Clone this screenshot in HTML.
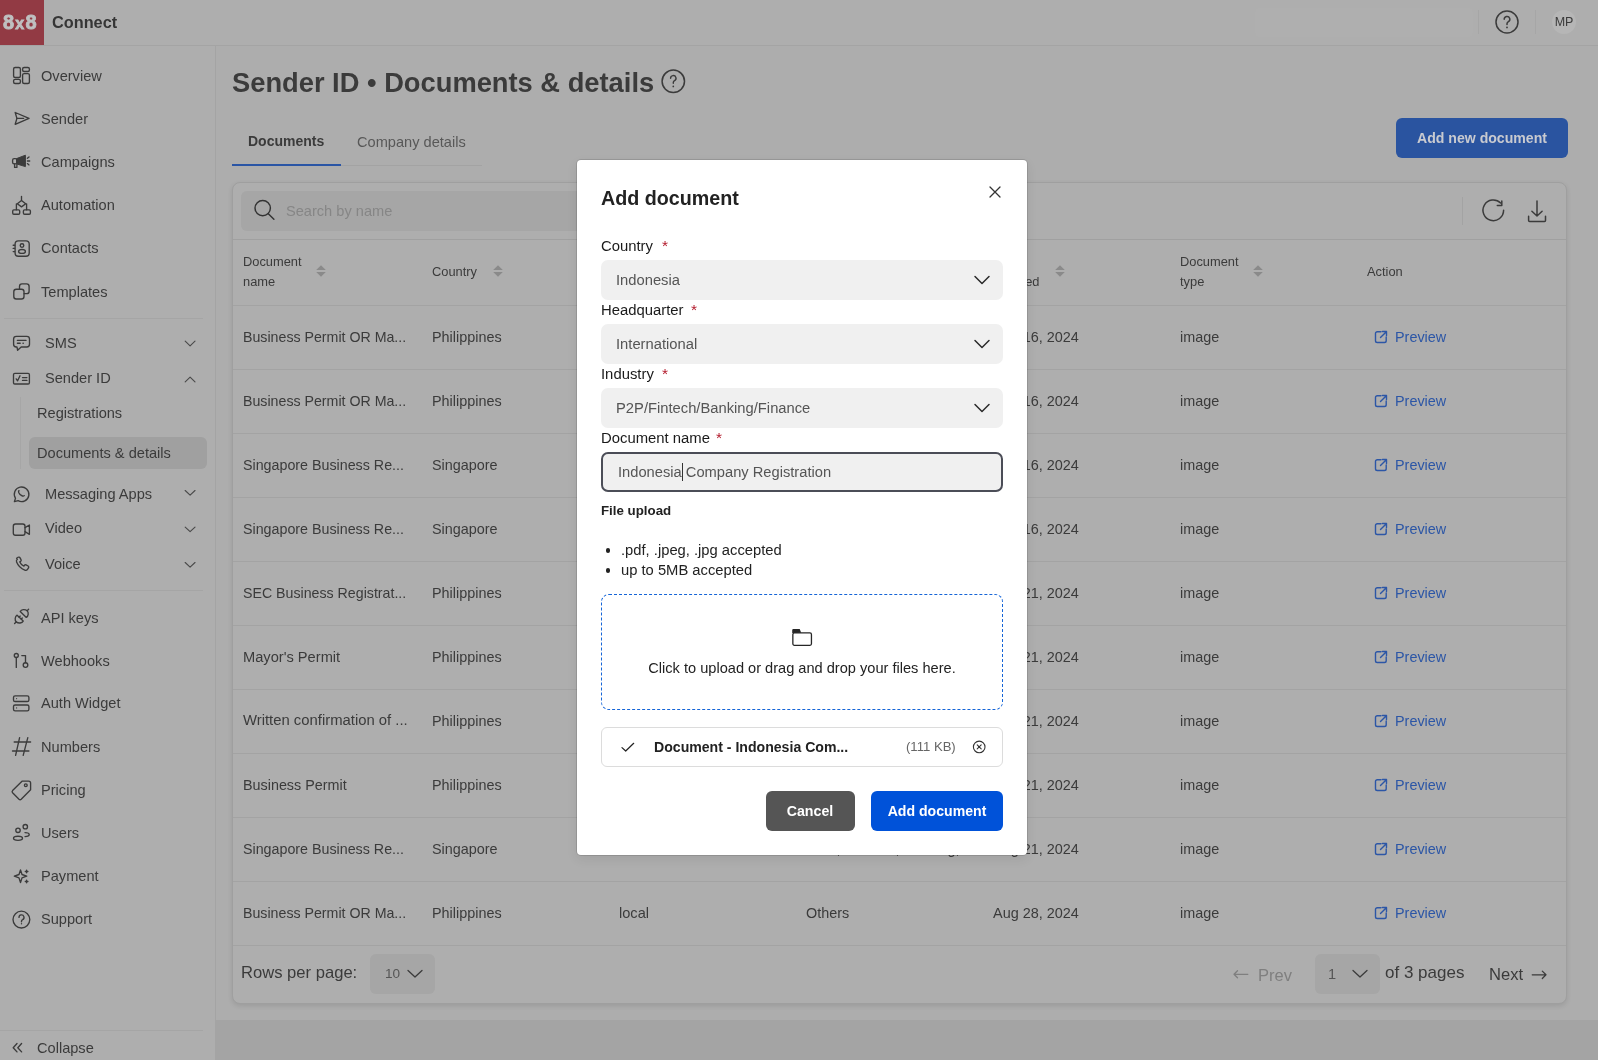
<!DOCTYPE html>
<html><head><meta charset="utf-8"><style>
html,body{margin:0;padding:0;width:1598px;height:1060px;overflow:hidden;background:#adadad;}
body{position:relative;font-family:"Liberation Sans",sans-serif;-webkit-font-smoothing:antialiased;}
.t{position:absolute;white-space:nowrap;line-height:1;will-change:transform;}
.r{position:absolute;}
svg.r{overflow:visible;}
</style></head><body>
<div class="r" style="left:0px;top:0px;width:1598px;height:1060px;background:#adadad;"></div>
<div class="r" style="left:215px;top:1020px;width:1383px;height:40px;background:#a4a4a4;"></div>
<div class="r" style="left:0px;top:0px;width:1598px;height:45px;background:#aeaeae;"></div>
<div class="r" style="left:0px;top:45px;width:1598px;height:1px;background:#a4a4a4;"></div>
<div class="r" style="left:0px;top:46px;width:215px;height:1014px;background:#aeaeae;"></div>
<div class="r" style="left:215px;top:46px;width:1px;height:1014px;background:#a4a4a4;"></div>
<div class="r" style="left:0px;top:0px;width:44px;height:45px;background:#923a44;"></div>
<div class="t" style="left:2.6px;top:11.97px;font-size:20px;color:#bfc0c1;font-weight:700;-webkit-text-stroke:0.8px #bfc0c1;letter-spacing:1.1px;">8<span style="font-size:16px;letter-spacing:1.3px;">x</span>8</div>
<div class="t" style="left:52px;top:13.80px;font-size:16.3px;color:#363636;font-weight:700;">Connect</div>
<div class="r" style="left:1255px;top:8px;width:218px;height:29px;background:#afafaf;border-radius:4px;"></div>
<div class="r" style="left:1478px;top:10px;width:1px;height:24px;background:#a6a6a6;"></div>
<div class="r" style="left:1535px;top:10px;width:1px;height:24px;background:#a6a6a6;"></div>
<svg class="r" style="left:1495px;top:10px;" width="24" height="24" viewBox="0 0 24 24"><circle cx="12" cy="12" r="11" fill="none" stroke="#3b3b3b" stroke-width="1.5"/><path d="M9.2 9.3a2.8 2.8 0 1 1 4.2 2.4c-.9.5-1.4 1-1.4 2.1v.6" fill="none" stroke="#3b3b3b" stroke-width="1.5" stroke-linecap="round"/><circle cx="12" cy="17.4" r="0.9" fill="#3b3b3b"/></svg>
<div class="r" style="left:1552px;top:10px;width:24px;height:24px;border-radius:50%;background:#b6b6b6;"></div>
<div class="t" style="left:1564px;top:15.92px;font-size:12.5px;color:#3b3b3b;font-weight:400;transform:translateX(-50%);">MP</div>
<div class="t" style="left:41px;top:68.64px;font-size:14.6px;color:#3b3b3b;font-weight:400;">Overview</div>
<div class="t" style="left:41px;top:111.94px;font-size:14.6px;color:#3b3b3b;font-weight:400;">Sender</div>
<div class="t" style="left:41px;top:155.14px;font-size:14.6px;color:#3b3b3b;font-weight:400;">Campaigns</div>
<div class="t" style="left:41px;top:198.14px;font-size:14.6px;color:#3b3b3b;font-weight:400;">Automation</div>
<div class="t" style="left:41px;top:241.14px;font-size:14.6px;color:#3b3b3b;font-weight:400;">Contacts</div>
<div class="t" style="left:41px;top:284.64px;font-size:14.6px;color:#3b3b3b;font-weight:400;">Templates</div>
<div class="r" style="left:4px;top:318px;width:199px;height:1px;background:#a5a5a5;"></div>
<div class="t" style="left:45px;top:335.64px;font-size:14.6px;color:#3b3b3b;font-weight:400;">SMS</div>
<div class="t" style="left:45px;top:370.64px;font-size:14.6px;color:#3b3b3b;font-weight:400;">Sender ID</div>
<div class="t" style="left:45px;top:486.64px;font-size:14.6px;color:#3b3b3b;font-weight:400;">Messaging Apps</div>
<div class="t" style="left:45px;top:521.14px;font-size:14.6px;color:#3b3b3b;font-weight:400;">Video</div>
<div class="t" style="left:45px;top:557.14px;font-size:14.6px;color:#3b3b3b;font-weight:400;">Voice</div>
<div class="r" style="left:20px;top:397px;width:1px;height:72px;background:#a6a6a6;"></div>
<div class="r" style="left:29px;top:437px;width:178px;height:32px;background:#a0a0a0;border-radius:6px;"></div>
<div class="t" style="left:37px;top:405.64px;font-size:14.6px;color:#3b3b3b;font-weight:400;">Registrations</div>
<div class="t" style="left:37px;top:446.24px;font-size:14.6px;color:#3b3b3b;font-weight:400;">Documents &amp; details</div>
<div class="r" style="left:4px;top:590px;width:199px;height:1px;background:#a5a5a5;"></div>
<div class="t" style="left:41px;top:610.64px;font-size:14.6px;color:#3b3b3b;font-weight:400;">API keys</div>
<div class="t" style="left:41px;top:653.64px;font-size:14.6px;color:#3b3b3b;font-weight:400;">Webhooks</div>
<div class="t" style="left:41px;top:696.14px;font-size:14.6px;color:#3b3b3b;font-weight:400;">Auth Widget</div>
<div class="t" style="left:41px;top:740.14px;font-size:14.6px;color:#3b3b3b;font-weight:400;">Numbers</div>
<div class="t" style="left:41px;top:783.14px;font-size:14.6px;color:#3b3b3b;font-weight:400;">Pricing</div>
<div class="t" style="left:41px;top:826.14px;font-size:14.6px;color:#3b3b3b;font-weight:400;">Users</div>
<div class="t" style="left:41px;top:869.14px;font-size:14.6px;color:#3b3b3b;font-weight:400;">Payment</div>
<div class="t" style="left:41px;top:912.14px;font-size:14.6px;color:#3b3b3b;font-weight:400;">Support</div>
<div class="r" style="left:0px;top:1030px;width:203px;height:1px;background:#a5a5a5;"></div>
<div class="t" style="left:37px;top:1041.04px;font-size:14.6px;color:#3b3b3b;font-weight:400;">Collapse</div>
<div class="t" style="left:232px;top:69.09px;font-size:27.3px;color:#3b3b3b;font-weight:700;">Sender ID • Documents &amp; details</div>
<svg class="r" style="left:660px;top:68px;" width="26" height="26" viewBox="0 0 26 26"><circle cx="13.3" cy="13.3" r="11.2" fill="none" stroke="#3b3b3b" stroke-width="1.5"/><path d="M10.6 10.2a2.7 2.7 0 1 1 4 2.4c-.9.5-1.3 1-1.3 2v.6" fill="none" stroke="#3b3b3b" stroke-width="1.4" stroke-linecap="round"/><circle cx="13.3" cy="18.4" r="0.85" fill="#3b3b3b"/></svg>
<div class="t" style="left:248px;top:134.15px;font-size:14px;color:#3b3b3b;font-weight:700;">Documents</div>
<div class="t" style="left:357px;top:135.04px;font-size:14.6px;color:#585858;font-weight:400;">Company details</div>
<div class="r" style="left:232px;top:165px;width:250px;height:1px;background:#a3a3a3;"></div>
<div class="r" style="left:232px;top:164px;width:109px;height:2px;background:#2a55a5;"></div>
<div class="r" style="left:1396px;top:118px;width:172px;height:40px;background:#2a54a0;border-radius:6px;"></div>
<div class="t" style="left:1482px;top:131.06px;font-size:14.1px;color:#c8cad0;font-weight:700;transform:translateX(-50%);">Add new document</div>
<div class="r" style="left:232px;top:182px;width:1335px;height:822px;background:#aeaeae;border:1px solid #9f9f9f;border-radius:8px;box-sizing:border-box;box-shadow:0 2px 5px rgba(0,0,0,0.10);"></div>
<div class="r" style="left:241px;top:191px;width:700px;height:40px;background:#a6a6a6;border-radius:6px;"></div>
<svg class="r" style="left:252px;top:198px;" width="26" height="26" viewBox="0 0 26 26"><circle cx="10.7" cy="10.1" r="7.7" fill="none" stroke="#333" stroke-width="1.45"/><path d="M16.3 15.7l5.6 5.6" stroke="#333" stroke-width="1.45" stroke-linecap="round"/></svg>
<div class="t" style="left:286px;top:203.64px;font-size:14.6px;color:#868686;font-weight:400;">Search by name</div>
<div class="r" style="left:1462px;top:197px;width:1px;height:28px;background:#a3a3a3;"></div>
<svg class="r" style="left:1480px;top:198px;" width="26" height="26" viewBox="0 0 26 26"><path d="M23.6 12.3A10.3 10.3 0 1 1 20.58 5.02" fill="none" stroke="#3b3b3b" stroke-width="1.5" stroke-linecap="round"/><path d="M21.8 2.9V7.5H17.3" fill="none" stroke="#3b3b3b" stroke-width="1.5" stroke-linecap="round" stroke-linejoin="round"/></svg>
<svg class="r" style="left:1524px;top:198.8px;" width="26" height="26" viewBox="0 0 26 26"><path d="M13 2.1V16.8M7.9 12.3L13 17L18.1 12.3M4.6 17.3V21.4q0 1 1 1H20.5q1 0 1-1V17.3" fill="none" stroke="#3b3b3b" stroke-width="1.5" stroke-linecap="round" stroke-linejoin="round"/></svg>
<div class="r" style="left:233px;top:239px;width:1333px;height:1px;background:#a0a0a0;"></div>
<div class="r" style="left:233px;top:305px;width:1333px;height:1px;background:#a3a3a3;"></div>
<div class="t" style="left:243px;top:255.62px;font-size:12.85px;color:#3b3b3b;font-weight:400;">Document</div>
<div class="t" style="left:243px;top:275.62px;font-size:12.85px;color:#3b3b3b;font-weight:400;">name</div>
<svg class="r" style="left:316px;top:264px;" width="10" height="14" viewBox="0 0 10 14"><path d="M5 1.2L9.8 5.9H0.2z M5 12.8L0.2 8.1h9.6z" fill="#8a8a8a"/></svg>
<div class="t" style="left:432px;top:265.62px;font-size:12.85px;color:#3b3b3b;font-weight:400;">Country</div>
<svg class="r" style="left:492.5px;top:264px;" width="10" height="14" viewBox="0 0 10 14"><path d="M5 1.2L9.8 5.9H0.2z M5 12.8L0.2 8.1h9.6z" fill="#8a8a8a"/></svg>
<div class="t" style="left:619px;top:255.62px;font-size:12.85px;color:#3b3b3b;font-weight:400;">Type</div>
<svg class="r" style="left:660px;top:264px;" width="10" height="14" viewBox="0 0 10 14"><path d="M5 1.2L9.8 5.9H0.2z M5 12.8L0.2 8.1h9.6z" fill="#8a8a8a"/></svg>
<div class="t" style="left:806px;top:255.62px;font-size:12.85px;color:#3b3b3b;font-weight:400;">Industry</div>
<svg class="r" style="left:870px;top:264px;" width="10" height="14" viewBox="0 0 10 14"><path d="M5 1.2L9.8 5.9H0.2z M5 12.8L0.2 8.1h9.6z" fill="#8a8a8a"/></svg>
<div class="t" style="left:993px;top:255.62px;font-size:12.85px;color:#3b3b3b;font-weight:400;">Date</div>
<div class="t" style="left:993px;top:275.62px;font-size:12.85px;color:#3b3b3b;font-weight:400;">updated</div>
<svg class="r" style="left:1055px;top:264px;" width="10" height="14" viewBox="0 0 10 14"><path d="M5 1.2L9.8 5.9H0.2z M5 12.8L0.2 8.1h9.6z" fill="#8a8a8a"/></svg>
<div class="t" style="left:1180px;top:255.62px;font-size:12.85px;color:#3b3b3b;font-weight:400;">Document</div>
<div class="t" style="left:1180px;top:275.62px;font-size:12.85px;color:#3b3b3b;font-weight:400;">type</div>
<svg class="r" style="left:1253px;top:264px;" width="10" height="14" viewBox="0 0 10 14"><path d="M5 1.2L9.8 5.9H0.2z M5 12.8L0.2 8.1h9.6z" fill="#8a8a8a"/></svg>
<div class="t" style="left:1367px;top:265.62px;font-size:12.85px;color:#3b3b3b;font-weight:400;">Action</div>
<div class="t" style="left:243px;top:329.98px;font-size:14.2px;color:#3b3b3b;font-weight:400;">Business Permit OR Ma...</div>
<div class="t" style="left:432px;top:329.81px;font-size:14.4px;color:#3b3b3b;font-weight:400;">Philippines</div>
<div class="t" style="left:619px;top:329.64px;font-size:14.6px;color:#3b3b3b;font-weight:400;">local</div>
<div class="t" style="left:806px;top:329.81px;font-size:14.4px;color:#3b3b3b;font-weight:400;">Others</div>
<div class="t" style="left:993px;top:329.77px;font-size:14.45px;color:#3b3b3b;font-weight:400;">Aug 16, 2024</div>
<div class="t" style="left:1180px;top:329.81px;font-size:14.4px;color:#3b3b3b;font-weight:400;">image</div>
<svg class="r" style="left:1373px;top:329px;" width="16" height="16" viewBox="0 0 16 16"><path d="M8 2.8H4.3A1.8 1.8 0 0 0 2.5 4.6v7.1a1.8 1.8 0 0 0 1.8 1.8h7.1a1.8 1.8 0 0 0 1.8-1.8V8M9.5 2.5h4v4M13.3 2.7L7.5 8.5" fill="none" stroke="#2c56a6" stroke-width="1.4" stroke-linecap="round" stroke-linejoin="round"/></svg>
<div class="t" style="left:1395px;top:329.81px;font-size:14.4px;color:#2c56a6;font-weight:400;">Preview</div>
<div class="r" style="left:233px;top:369px;width:1333px;height:1px;background:#a3a3a3;"></div>
<div class="t" style="left:243px;top:393.98px;font-size:14.2px;color:#3b3b3b;font-weight:400;">Business Permit OR Ma...</div>
<div class="t" style="left:432px;top:393.81px;font-size:14.4px;color:#3b3b3b;font-weight:400;">Philippines</div>
<div class="t" style="left:619px;top:393.64px;font-size:14.6px;color:#3b3b3b;font-weight:400;">local</div>
<div class="t" style="left:806px;top:393.81px;font-size:14.4px;color:#3b3b3b;font-weight:400;">Others</div>
<div class="t" style="left:993px;top:393.77px;font-size:14.45px;color:#3b3b3b;font-weight:400;">Aug 16, 2024</div>
<div class="t" style="left:1180px;top:393.81px;font-size:14.4px;color:#3b3b3b;font-weight:400;">image</div>
<svg class="r" style="left:1373px;top:393px;" width="16" height="16" viewBox="0 0 16 16"><path d="M8 2.8H4.3A1.8 1.8 0 0 0 2.5 4.6v7.1a1.8 1.8 0 0 0 1.8 1.8h7.1a1.8 1.8 0 0 0 1.8-1.8V8M9.5 2.5h4v4M13.3 2.7L7.5 8.5" fill="none" stroke="#2c56a6" stroke-width="1.4" stroke-linecap="round" stroke-linejoin="round"/></svg>
<div class="t" style="left:1395px;top:393.81px;font-size:14.4px;color:#2c56a6;font-weight:400;">Preview</div>
<div class="r" style="left:233px;top:433px;width:1333px;height:1px;background:#a3a3a3;"></div>
<div class="t" style="left:243px;top:457.91px;font-size:14.28px;color:#3b3b3b;font-weight:400;">Singapore Business Re...</div>
<div class="t" style="left:432px;top:457.81px;font-size:14.4px;color:#3b3b3b;font-weight:400;">Singapore</div>
<div class="t" style="left:619px;top:457.64px;font-size:14.6px;color:#3b3b3b;font-weight:400;">local</div>
<div class="t" style="left:806px;top:457.81px;font-size:14.4px;color:#3b3b3b;font-weight:400;">Others</div>
<div class="t" style="left:993px;top:457.77px;font-size:14.45px;color:#3b3b3b;font-weight:400;">Aug 16, 2024</div>
<div class="t" style="left:1180px;top:457.81px;font-size:14.4px;color:#3b3b3b;font-weight:400;">image</div>
<svg class="r" style="left:1373px;top:457px;" width="16" height="16" viewBox="0 0 16 16"><path d="M8 2.8H4.3A1.8 1.8 0 0 0 2.5 4.6v7.1a1.8 1.8 0 0 0 1.8 1.8h7.1a1.8 1.8 0 0 0 1.8-1.8V8M9.5 2.5h4v4M13.3 2.7L7.5 8.5" fill="none" stroke="#2c56a6" stroke-width="1.4" stroke-linecap="round" stroke-linejoin="round"/></svg>
<div class="t" style="left:1395px;top:457.81px;font-size:14.4px;color:#2c56a6;font-weight:400;">Preview</div>
<div class="r" style="left:233px;top:497px;width:1333px;height:1px;background:#a3a3a3;"></div>
<div class="t" style="left:243px;top:521.91px;font-size:14.28px;color:#3b3b3b;font-weight:400;">Singapore Business Re...</div>
<div class="t" style="left:432px;top:521.81px;font-size:14.4px;color:#3b3b3b;font-weight:400;">Singapore</div>
<div class="t" style="left:619px;top:521.64px;font-size:14.6px;color:#3b3b3b;font-weight:400;">local</div>
<div class="t" style="left:806px;top:521.81px;font-size:14.4px;color:#3b3b3b;font-weight:400;">Others</div>
<div class="t" style="left:993px;top:521.77px;font-size:14.45px;color:#3b3b3b;font-weight:400;">Aug 16, 2024</div>
<div class="t" style="left:1180px;top:521.81px;font-size:14.4px;color:#3b3b3b;font-weight:400;">image</div>
<svg class="r" style="left:1373px;top:521px;" width="16" height="16" viewBox="0 0 16 16"><path d="M8 2.8H4.3A1.8 1.8 0 0 0 2.5 4.6v7.1a1.8 1.8 0 0 0 1.8 1.8h7.1a1.8 1.8 0 0 0 1.8-1.8V8M9.5 2.5h4v4M13.3 2.7L7.5 8.5" fill="none" stroke="#2c56a6" stroke-width="1.4" stroke-linecap="round" stroke-linejoin="round"/></svg>
<div class="t" style="left:1395px;top:521.81px;font-size:14.4px;color:#2c56a6;font-weight:400;">Preview</div>
<div class="r" style="left:233px;top:561px;width:1333px;height:1px;background:#a3a3a3;"></div>
<div class="t" style="left:243px;top:585.98px;font-size:14.2px;color:#3b3b3b;font-weight:400;">SEC Business Registrat...</div>
<div class="t" style="left:432px;top:585.81px;font-size:14.4px;color:#3b3b3b;font-weight:400;">Philippines</div>
<div class="t" style="left:619px;top:585.64px;font-size:14.6px;color:#3b3b3b;font-weight:400;">local</div>
<div class="t" style="left:806px;top:585.81px;font-size:14.4px;color:#3b3b3b;font-weight:400;">Others</div>
<div class="t" style="left:993px;top:585.77px;font-size:14.45px;color:#3b3b3b;font-weight:400;">Aug 21, 2024</div>
<div class="t" style="left:1180px;top:585.81px;font-size:14.4px;color:#3b3b3b;font-weight:400;">image</div>
<svg class="r" style="left:1373px;top:585px;" width="16" height="16" viewBox="0 0 16 16"><path d="M8 2.8H4.3A1.8 1.8 0 0 0 2.5 4.6v7.1a1.8 1.8 0 0 0 1.8 1.8h7.1a1.8 1.8 0 0 0 1.8-1.8V8M9.5 2.5h4v4M13.3 2.7L7.5 8.5" fill="none" stroke="#2c56a6" stroke-width="1.4" stroke-linecap="round" stroke-linejoin="round"/></svg>
<div class="t" style="left:1395px;top:585.81px;font-size:14.4px;color:#2c56a6;font-weight:400;">Preview</div>
<div class="r" style="left:233px;top:625px;width:1333px;height:1px;background:#a3a3a3;"></div>
<div class="t" style="left:243px;top:649.60px;font-size:14.65px;color:#3b3b3b;font-weight:400;">Mayor&#x27;s Permit</div>
<div class="t" style="left:432px;top:649.81px;font-size:14.4px;color:#3b3b3b;font-weight:400;">Philippines</div>
<div class="t" style="left:619px;top:649.64px;font-size:14.6px;color:#3b3b3b;font-weight:400;">local</div>
<div class="t" style="left:806px;top:649.81px;font-size:14.4px;color:#3b3b3b;font-weight:400;">Others</div>
<div class="t" style="left:993px;top:649.77px;font-size:14.45px;color:#3b3b3b;font-weight:400;">Aug 21, 2024</div>
<div class="t" style="left:1180px;top:649.81px;font-size:14.4px;color:#3b3b3b;font-weight:400;">image</div>
<svg class="r" style="left:1373px;top:649px;" width="16" height="16" viewBox="0 0 16 16"><path d="M8 2.8H4.3A1.8 1.8 0 0 0 2.5 4.6v7.1a1.8 1.8 0 0 0 1.8 1.8h7.1a1.8 1.8 0 0 0 1.8-1.8V8M9.5 2.5h4v4M13.3 2.7L7.5 8.5" fill="none" stroke="#2c56a6" stroke-width="1.4" stroke-linecap="round" stroke-linejoin="round"/></svg>
<div class="t" style="left:1395px;top:649.81px;font-size:14.4px;color:#2c56a6;font-weight:400;">Preview</div>
<div class="r" style="left:233px;top:689px;width:1333px;height:1px;background:#a3a3a3;"></div>
<div class="t" style="left:243px;top:713.43px;font-size:14.85px;color:#3b3b3b;font-weight:400;">Written confirmation of ...</div>
<div class="t" style="left:432px;top:713.81px;font-size:14.4px;color:#3b3b3b;font-weight:400;">Philippines</div>
<div class="t" style="left:619px;top:713.64px;font-size:14.6px;color:#3b3b3b;font-weight:400;">local</div>
<div class="t" style="left:806px;top:713.81px;font-size:14.4px;color:#3b3b3b;font-weight:400;">Others</div>
<div class="t" style="left:993px;top:713.77px;font-size:14.45px;color:#3b3b3b;font-weight:400;">Aug 21, 2024</div>
<div class="t" style="left:1180px;top:713.81px;font-size:14.4px;color:#3b3b3b;font-weight:400;">image</div>
<svg class="r" style="left:1373px;top:713px;" width="16" height="16" viewBox="0 0 16 16"><path d="M8 2.8H4.3A1.8 1.8 0 0 0 2.5 4.6v7.1a1.8 1.8 0 0 0 1.8 1.8h7.1a1.8 1.8 0 0 0 1.8-1.8V8M9.5 2.5h4v4M13.3 2.7L7.5 8.5" fill="none" stroke="#2c56a6" stroke-width="1.4" stroke-linecap="round" stroke-linejoin="round"/></svg>
<div class="t" style="left:1395px;top:713.81px;font-size:14.4px;color:#2c56a6;font-weight:400;">Preview</div>
<div class="r" style="left:233px;top:753px;width:1333px;height:1px;background:#a3a3a3;"></div>
<div class="t" style="left:243px;top:777.85px;font-size:14.35px;color:#3b3b3b;font-weight:400;">Business Permit</div>
<div class="t" style="left:432px;top:777.81px;font-size:14.4px;color:#3b3b3b;font-weight:400;">Philippines</div>
<div class="t" style="left:619px;top:777.64px;font-size:14.6px;color:#3b3b3b;font-weight:400;">local</div>
<div class="t" style="left:806px;top:777.81px;font-size:14.4px;color:#3b3b3b;font-weight:400;">Others</div>
<div class="t" style="left:993px;top:777.77px;font-size:14.45px;color:#3b3b3b;font-weight:400;">Aug 21, 2024</div>
<div class="t" style="left:1180px;top:777.81px;font-size:14.4px;color:#3b3b3b;font-weight:400;">image</div>
<svg class="r" style="left:1373px;top:777px;" width="16" height="16" viewBox="0 0 16 16"><path d="M8 2.8H4.3A1.8 1.8 0 0 0 2.5 4.6v7.1a1.8 1.8 0 0 0 1.8 1.8h7.1a1.8 1.8 0 0 0 1.8-1.8V8M9.5 2.5h4v4M13.3 2.7L7.5 8.5" fill="none" stroke="#2c56a6" stroke-width="1.4" stroke-linecap="round" stroke-linejoin="round"/></svg>
<div class="t" style="left:1395px;top:777.81px;font-size:14.4px;color:#2c56a6;font-weight:400;">Preview</div>
<div class="r" style="left:233px;top:817px;width:1333px;height:1px;background:#a3a3a3;"></div>
<div class="t" style="left:243px;top:841.91px;font-size:14.28px;color:#3b3b3b;font-weight:400;">Singapore Business Re...</div>
<div class="t" style="left:432px;top:841.81px;font-size:14.4px;color:#3b3b3b;font-weight:400;">Singapore</div>
<div class="t" style="left:619px;top:841.64px;font-size:14.6px;color:#3b3b3b;font-weight:400;">local</div>
<div class="t" style="left:806px;top:841.81px;font-size:14.4px;color:#3b3b3b;font-weight:400;">Tech, Finance, Banking, ...</div>
<div class="t" style="left:993px;top:841.77px;font-size:14.45px;color:#3b3b3b;font-weight:400;">Aug 21, 2024</div>
<div class="t" style="left:1180px;top:841.81px;font-size:14.4px;color:#3b3b3b;font-weight:400;">image</div>
<svg class="r" style="left:1373px;top:841px;" width="16" height="16" viewBox="0 0 16 16"><path d="M8 2.8H4.3A1.8 1.8 0 0 0 2.5 4.6v7.1a1.8 1.8 0 0 0 1.8 1.8h7.1a1.8 1.8 0 0 0 1.8-1.8V8M9.5 2.5h4v4M13.3 2.7L7.5 8.5" fill="none" stroke="#2c56a6" stroke-width="1.4" stroke-linecap="round" stroke-linejoin="round"/></svg>
<div class="t" style="left:1395px;top:841.81px;font-size:14.4px;color:#2c56a6;font-weight:400;">Preview</div>
<div class="r" style="left:233px;top:881px;width:1333px;height:1px;background:#a3a3a3;"></div>
<div class="t" style="left:243px;top:905.98px;font-size:14.2px;color:#3b3b3b;font-weight:400;">Business Permit OR Ma...</div>
<div class="t" style="left:432px;top:905.81px;font-size:14.4px;color:#3b3b3b;font-weight:400;">Philippines</div>
<div class="t" style="left:619px;top:905.64px;font-size:14.6px;color:#3b3b3b;font-weight:400;">local</div>
<div class="t" style="left:806px;top:905.81px;font-size:14.4px;color:#3b3b3b;font-weight:400;">Others</div>
<div class="t" style="left:993px;top:905.77px;font-size:14.45px;color:#3b3b3b;font-weight:400;">Aug 28, 2024</div>
<div class="t" style="left:1180px;top:905.81px;font-size:14.4px;color:#3b3b3b;font-weight:400;">image</div>
<svg class="r" style="left:1373px;top:905px;" width="16" height="16" viewBox="0 0 16 16"><path d="M8 2.8H4.3A1.8 1.8 0 0 0 2.5 4.6v7.1a1.8 1.8 0 0 0 1.8 1.8h7.1a1.8 1.8 0 0 0 1.8-1.8V8M9.5 2.5h4v4M13.3 2.7L7.5 8.5" fill="none" stroke="#2c56a6" stroke-width="1.4" stroke-linecap="round" stroke-linejoin="round"/></svg>
<div class="t" style="left:1395px;top:905.81px;font-size:14.4px;color:#2c56a6;font-weight:400;">Preview</div>
<div class="r" style="left:233px;top:945px;width:1333px;height:1px;background:#a3a3a3;"></div>
<div class="t" style="left:241px;top:964.95px;font-size:16.6px;color:#3b3b3b;font-weight:400;">Rows per page:</div>
<div class="r" style="left:370px;top:954px;width:65px;height:40px;background:#a6a6a6;border-radius:6px;"></div>
<div class="t" style="left:384.5px;top:967.49px;font-size:13.6px;color:#555;font-weight:400;">10</div>
<svg class="r" style="left:405.5px;top:968px;" width="18" height="12" viewBox="0 0 18 12"><path d="M2 2.5l7 6.5 7-6.5" fill="none" stroke="#3b3b3b" stroke-width="1.3" stroke-linecap="round" stroke-linejoin="round"/></svg>
<svg class="r" style="left:1231px;top:968.5px;" width="18" height="12" viewBox="0 0 18 12"><path d="M16.8 5.3H3M6.5 1.8L3 5.3L6.5 8.8" fill="none" stroke="#7f7f7f" stroke-width="1.3" stroke-linecap="round" stroke-linejoin="round"/></svg>
<div class="t" style="left:1257.5px;top:967.03px;font-size:16.5px;color:#7f7f7f;font-weight:400;">Prev</div>
<div class="r" style="left:1315px;top:954px;width:65px;height:40px;background:#a6a6a6;border-radius:6px;"></div>
<div class="t" style="left:1328px;top:966.64px;font-size:14.6px;color:#555;font-weight:400;">1</div>
<svg class="r" style="left:1350.5px;top:968px;" width="18" height="12" viewBox="0 0 18 12"><path d="M2 2.5l7 6.5 7-6.5" fill="none" stroke="#3b3b3b" stroke-width="1.3" stroke-linecap="round" stroke-linejoin="round"/></svg>
<div class="t" style="left:1384.5px;top:964.41px;font-size:17.0px;color:#3b3b3b;font-weight:400;">of 3 pages</div>
<div class="t" style="left:1488.5px;top:966.95px;font-size:16.6px;color:#3b3b3b;font-weight:400;">Next</div>
<svg class="r" style="left:1530px;top:968.5px;" width="18" height="12" viewBox="0 0 18 12"><path d="M2.2 5.8H16M12.3 2.1L16 5.8L12.3 9.5" fill="none" stroke="#3b3b3b" stroke-width="1.25" stroke-linecap="round" stroke-linejoin="round"/></svg>
<div class="r" style="left:577px;top:160px;width:450px;height:695px;background:#ffffff;border-radius:4px;box-shadow:0 0 0 1px rgba(0,0,0,0.12),0 4px 12px rgba(0,0,0,0.08);"></div>
<div class="t" style="left:601px;top:189.02px;font-size:19.7px;color:#222222;font-weight:700;">Add document</div>
<svg class="r" style="left:987px;top:184px;" width="16" height="16" viewBox="0 0 16 16"><path d="M3 3l10 10M13 3L3 13" stroke="#333" stroke-width="1.3" stroke-linecap="round"/></svg>
<div class="t" style="left:601px;top:239.23px;font-size:14.85px;color:#1a1a1a;font-weight:400;">Country</div>
<div class="r" style="left:601px;top:260px;width:402px;height:40px;background:#f0f0f0;border-radius:7px;"></div>
<div class="t" style="left:616px;top:272.51px;font-size:14.75px;color:#555555;font-weight:400;">Indonesia</div>
<svg class="r" style="left:972px;top:272px;" width="20" height="16" viewBox="0 0 20 16"><path d="M3 4.5l7 7 7-7" fill="none" stroke="#2a2a2a" stroke-width="1.5" stroke-linecap="round" stroke-linejoin="round"/></svg>
<div class="t" style="left:601px;top:303.23px;font-size:14.85px;color:#1a1a1a;font-weight:400;">Headquarter</div>
<div class="r" style="left:601px;top:324px;width:402px;height:40px;background:#f0f0f0;border-radius:7px;"></div>
<div class="t" style="left:616px;top:336.51px;font-size:14.75px;color:#555555;font-weight:400;">International</div>
<svg class="r" style="left:972px;top:336px;" width="20" height="16" viewBox="0 0 20 16"><path d="M3 4.5l7 7 7-7" fill="none" stroke="#2a2a2a" stroke-width="1.5" stroke-linecap="round" stroke-linejoin="round"/></svg>
<div class="t" style="left:601px;top:367.23px;font-size:14.85px;color:#1a1a1a;font-weight:400;">Industry</div>
<div class="r" style="left:601px;top:388px;width:402px;height:40px;background:#f0f0f0;border-radius:7px;"></div>
<div class="t" style="left:616px;top:400.51px;font-size:14.75px;color:#555555;font-weight:400;">P2P/Fintech/Banking/Finance</div>
<svg class="r" style="left:972px;top:400px;" width="20" height="16" viewBox="0 0 20 16"><path d="M3 4.5l7 7 7-7" fill="none" stroke="#2a2a2a" stroke-width="1.5" stroke-linecap="round" stroke-linejoin="round"/></svg>
<div class="t" style="left:661.5px;top:238.38px;font-size:15.5px;color:#b3192b;font-weight:400;">*</div>
<div class="t" style="left:690.5px;top:302.38px;font-size:15.5px;color:#b3192b;font-weight:400;">*</div>
<div class="t" style="left:661.5px;top:366.38px;font-size:15.5px;color:#b3192b;font-weight:400;">*</div>
<div class="t" style="left:715.5px;top:430.38px;font-size:15.5px;color:#b3192b;font-weight:400;">*</div>
<div class="t" style="left:601px;top:431.23px;font-size:14.85px;color:#1a1a1a;font-weight:400;">Document name</div>
<div class="r" style="left:601px;top:452px;width:402px;height:40px;background:#f0f0f0;border:2px solid #4b4d57;border-radius:7px;box-sizing:border-box;"></div>
<div class="t" style="left:618px;top:464.56px;font-size:14.7px;color:#555555;font-weight:400;">Indonesia Company Registration</div>
<div class="r" style="left:682px;top:463px;width:1px;height:18px;background:#333;"></div>
<div class="t" style="left:601px;top:503.74px;font-size:13.3px;color:#222222;font-weight:700;">File upload</div>
<div class="r" style="left:605.5px;top:548px;width:4.6px;height:4.6px;border-radius:50%;background:#222"></div>
<div class="r" style="left:605.5px;top:568px;width:4.6px;height:4.6px;border-radius:50%;background:#222"></div>
<div class="t" style="left:621px;top:542.51px;font-size:14.75px;color:#222222;font-weight:400;">.pdf, .jpeg, .jpg accepted</div>
<div class="t" style="left:621px;top:562.51px;font-size:14.75px;color:#222222;font-weight:400;">up to 5MB accepted</div>
<div class="r" style="left:601px;top:594px;width:402px;height:116px;background:none;border:1px dashed #1565d8;border-radius:8px;box-sizing:border-box;"></div>
<svg class="r" style="left:790px;top:627px;" width="24" height="20" viewBox="0 0 24 20"><path d="M2.2 6V3.2a1.2 1.2 0 0 1 1.2-1.2H9.7l1.5 3.8z" fill="#262626"/><rect x="2.85" y="5.95" width="18.6" height="12.35" rx="1.5" fill="none" stroke="#262626" stroke-width="1.3"/></svg>
<div class="t" style="left:802px;top:660.64px;font-size:14.6px;color:#222222;font-weight:400;transform:translateX(-50%);">Click to upload or drag and drop your files here.</div>
<div class="r" style="left:601px;top:727px;width:402px;height:40px;background:#ffffff;border:1px solid #dcdcdc;border-radius:6px;box-sizing:border-box;"></div>
<svg class="r" style="left:619px;top:739px;" width="18" height="16" viewBox="0 0 18 16"><path d="M3 8.6L6.7 12L14.7 4.3" fill="none" stroke="#222" stroke-width="1.2" stroke-linecap="round" stroke-linejoin="round"/></svg>
<div class="t" style="left:654px;top:740.06px;font-size:14.1px;color:#222222;font-weight:700;">Document - Indonesia Com...</div>
<div class="t" style="right:642.3px;top:739.91px;font-size:13.1px;color:#666666;font-weight:400;">(111 KB)</div>
<svg class="r" style="left:970px;top:738px;" width="18" height="18" viewBox="0 0 18 18"><circle cx="9.2" cy="8.9" r="5.8" fill="none" stroke="#333" stroke-width="1.1"/><path d="M7.2 6.9l4 4M11.2 6.9l-4 4" stroke="#333" stroke-width="1.1" stroke-linecap="round"/></svg>
<div class="r" style="left:766px;top:791px;width:89px;height:40px;background:#555555;border-radius:6px;"></div>
<div class="t" style="left:810.3px;top:803.98px;font-size:14.2px;color:#ffffff;font-weight:700;transform:translateX(-50%);">Cancel</div>
<div class="r" style="left:871px;top:791px;width:132px;height:40px;background:#0052d9;border-radius:6px;"></div>
<div class="t" style="left:937px;top:804.06px;font-size:14.1px;color:#ffffff;font-weight:700;transform:translateX(-50%);">Add document</div>
<svg class="r" style="left:0px;top:0px;" width="215" height="1060" viewBox="0 0 215 1060"><rect x="13.6" y="67.5" width="6.8" height="10" rx="1.5" fill="none" stroke="#3b3b3b" stroke-width="1.35"/><rect x="22.6" y="67.5" width="6.8" height="4" rx="1.5" fill="none" stroke="#3b3b3b" stroke-width="1.35"/><rect x="13.6" y="79.3" width="6.8" height="4.2" rx="1.5" fill="none" stroke="#3b3b3b" stroke-width="1.35"/><rect x="22.6" y="73.6" width="6.8" height="9.9" rx="1.5" fill="none" stroke="#3b3b3b" stroke-width="1.35"/><path d="M15.2 112.5L29 118.4L15.2 124.3L16.9 118.4Z" fill="none" stroke="#3b3b3b" stroke-width="1.35" stroke-linecap="round" stroke-linejoin="round" /><path d="M16.9 118.4H23.6" fill="none" stroke="#3b3b3b" stroke-width="1.35" stroke-linecap="round" stroke-linejoin="round" /><rect x="12.6" y="158.6" width="4.3" height="5.3" rx="1.6" fill="none" stroke="#3b3b3b" stroke-width="1.35"/><path d="M14.6 164v3.4h2.3V164" fill="none" stroke="#3b3b3b" stroke-width="1.35" stroke-linecap="round" stroke-linejoin="round" /><path d="M16.6 158.6L25.4 155.2V166.6L16.6 163.9Z" fill="#3b3b3b" stroke="#3b3b3b" stroke-width="1" stroke-linejoin="round"/><path d="M27.4 158.2l1.6-1.3M27.4 161h2.3M27.4 163.6l1.6 1.3" fill="none" stroke="#3b3b3b" stroke-width="1.35" stroke-linecap="round" stroke-linejoin="round" stroke-width="1.1"/><path d="M21.5 196.3v4.2M21.5 200.5l-4.2 3.3 4.2 3.1 4.2-3.1z M17.3 203.8h-0.9v6 M25.7 203.8h0.9v6" fill="none" stroke="#3b3b3b" stroke-width="1.35" stroke-linecap="round" stroke-linejoin="round" /><rect x="12.7" y="209.9" width="7" height="4.3" rx="1.2" fill="none" stroke="#3b3b3b" stroke-width="1.35"/><rect x="23.4" y="209.9" width="7" height="4.3" rx="1.2" fill="none" stroke="#3b3b3b" stroke-width="1.35"/><rect x="15.1" y="240.8" width="14.1" height="15.4" rx="3.2" fill="none" stroke="#3b3b3b" stroke-width="1.35"/><circle cx="22" cy="245.5" r="1.8" fill="none" stroke="#3b3b3b" stroke-width="1.35"/><ellipse cx="22" cy="251.4" rx="3.4" ry="1.9" fill="none" stroke="#3b3b3b" stroke-width="1.35"/><path d="M13.2 245.2h1.4M13.2 248.4h1.4M13.2 251.6h1.4" fill="none" stroke="#3b3b3b" stroke-width="1.35" stroke-linecap="round" stroke-linejoin="round" stroke-width="1.1"/><path d="M19.5 288.9V286.4a2.5 2.5 0 0 1 2.5-2.5h4.6a2.5 2.5 0 0 1 2.5 2.5v4.8a2.5 2.5 0 0 1-2.5 2.5h-2.5" fill="none" stroke="#3b3b3b" stroke-width="1.35" stroke-linecap="round" stroke-linejoin="round" /><rect x="13.8" y="289.2" width="10.2" height="9.8" rx="2.5" fill="none" stroke="#3b3b3b" stroke-width="1.35"/><path d="M16.3 336.3h10.5a2.7 2.7 0 0 1 2.7 2.7v5.3a2.7 2.7 0 0 1-2.7 2.7h-5.6l-3.6 3.3-0.6-3.3h-0.7a2.7 2.7 0 0 1-2.7-2.7v-5.3a2.7 2.7 0 0 1 2.7-2.7z" fill="none" stroke="#3b3b3b" stroke-width="1.35" stroke-linecap="round" stroke-linejoin="round" /><path d="M17.4 340.4h8.6M17.4 343.2h2.8M23 343.2h0.3" fill="none" stroke="#3b3b3b" stroke-width="1.35" stroke-linecap="round" stroke-linejoin="round" stroke-width="1.1"/><rect x="13.5" y="373.4" width="15.9" height="10.6" rx="1.3" fill="none" stroke="#3b3b3b" stroke-width="1.35"/><path d="M16.2 378.9l1.4 1.9 2.4-5M22.5 377.6h4.4M22.5 380.4h4.4" fill="none" stroke="#3b3b3b" stroke-width="1.35" stroke-linecap="round" stroke-linejoin="round" stroke-width="1.1"/><path d="M14.4 501.6l1.1-3.3a7.3 7.3 0 1 1 2.6 2.4z" fill="none" stroke="#3b3b3b" stroke-width="1.35" stroke-linecap="round" stroke-linejoin="round" /><path d="M19 490.6c-.5.4-.6 1-.3 1.8.7 1.7 2 3 3.7 3.6.8.3 1.4.1 1.8-.4" fill="none" stroke="#3b3b3b" stroke-width="1.35" stroke-linecap="round" stroke-linejoin="round" stroke-width="1.6"/><rect x="13.3" y="524" width="11.7" height="11.2" rx="2.2" fill="none" stroke="#3b3b3b" stroke-width="1.35"/><path d="M25 527.6l4.4-2.6v9.3l-4.4-2.6" fill="none" stroke="#3b3b3b" stroke-width="1.35" stroke-linecap="round" stroke-linejoin="round" /><path d="M16.6 558.3l1.5-1a1.3 1.3 0 0 1 1.8.4l1.1 2a1.3 1.3 0 0 1-.4 1.7l-.8.5c.8 1.8 2.3 3.4 4.1 4.2l.5-.8a1.3 1.3 0 0 1 1.7-.4l2 1.1a1.3 1.3 0 0 1 .4 1.8l-1 1.5c-.6.9-1.7 1.2-2.7.8-3.7-1.5-6.7-4.5-8.2-8.2-.4-1-.1-2.1.8-2.7z" fill="none" stroke="#3b3b3b" stroke-width="1.35" stroke-linecap="round" stroke-linejoin="round" /><path d="M20.2 611.5C21.3 609.4 24.8 608.9 27.2 610.7C28.9 612.6 28.4 616.3 26.3 617.4Z" fill="none" stroke="#3b3b3b" stroke-width="1.35" stroke-linecap="round" stroke-linejoin="round" /><path d="M23.2 621.1C22.1 623.2 18.6 623.7 16.2 621.9C14.5 620 15 616.3 17.1 615.2Z" fill="none" stroke="#3b3b3b" stroke-width="1.35" stroke-linecap="round" stroke-linejoin="round" /><path d="M27.2 610.7L28.6 609.3M16.2 621.9L14.6 623.5M19.1 617.2l1.1-1.1M21.2 619.1l1.1-1.1" fill="none" stroke="#3b3b3b" stroke-width="1.35" stroke-linecap="round" stroke-linejoin="round" /><circle cx="16.3" cy="655.5" r="2.0" fill="none" stroke="#3b3b3b" stroke-width="1.35"/><path d="M16.3 657.5v9.9" fill="none" stroke="#3b3b3b" stroke-width="1.35" stroke-linecap="round" stroke-linejoin="round" /><path d="M21.8 655.6h3.7v7.1" fill="none" stroke="#3b3b3b" stroke-width="1.35" stroke-linecap="round" stroke-linejoin="round" /><circle cx="25.5" cy="665" r="2.3" fill="none" stroke="#3b3b3b" stroke-width="1.35"/><rect x="13.5" y="695.9" width="15.4" height="5.6" rx="1.6" fill="none" stroke="#3b3b3b" stroke-width="1.35"/><rect x="13.5" y="705" width="15.4" height="5.8" rx="1.6" fill="none" stroke="#3b3b3b" stroke-width="1.35"/><circle cx="16.6" cy="698.6" r="0.6" fill="#3b3b3b"/><circle cx="16.6" cy="707.9" r="0.6" fill="#3b3b3b"/><path d="M14.2 742h16.4M12.5 751h16.4M19.6 737.6l-4 17.8M27.8 737.6l-4.6 17.8" fill="none" stroke="#3b3b3b" stroke-width="1.35" stroke-linecap="round" stroke-linejoin="round" stroke-width="1.4"/><path d="M12.6 790.6l9.4-9.4h6.6a2 2 0 0 1 2 2v6.6l-9.4 9.4a1.6 1.6 0 0 1-2.2 0l-6.4-6.4a1.6 1.6 0 0 1 0-2.2z" fill="none" stroke="#3b3b3b" stroke-width="1.35" stroke-linecap="round" stroke-linejoin="round" /><circle cx="25.8" cy="785.3" r="1.4" fill="none" stroke="#3b3b3b" stroke-width="1.35"/><circle cx="18" cy="830.3" r="2.2" fill="none" stroke="#3b3b3b" stroke-width="1.35"/><ellipse cx="18" cy="838.3" rx="4.5" ry="2.1" fill="none" stroke="#3b3b3b" stroke-width="1.35"/><circle cx="25.3" cy="826.7" r="2.2" fill="none" stroke="#3b3b3b" stroke-width="1.35"/><path d="M25 832.6c2.6 0 4.2.9 4.2 2 0 1.1-1.6 2-4.2 2" fill="none" stroke="#3b3b3b" stroke-width="1.35" stroke-linecap="round" stroke-linejoin="round" /><path d="M20.5 870l1.5 4.5 4.7 1.7-4.7 1.7-1.5 4.7-1.5-4.7-4.7-1.7 4.7-1.7z" fill="none" stroke="#3b3b3b" stroke-width="1.35" stroke-linecap="round" stroke-linejoin="round" /><path d="M26.6 870.2v2.6M25.3 871.5h2.6M26.6 880.2v2.6M25.3 881.5h2.6" fill="none" stroke="#3b3b3b" stroke-width="1.35" stroke-linecap="round" stroke-linejoin="round" stroke-width="1.1"/><circle cx="21.4" cy="919.6" r="8.4" fill="none" stroke="#3b3b3b" stroke-width="1.35"/><path d="M19 917.4a2.5 2.5 0 1 1 3.6 2.2c-.7.3-1.1.8-1.1 1.6v.5" fill="none" stroke="#3b3b3b" stroke-width="1.35" stroke-linecap="round" stroke-linejoin="round" /><circle cx="21.5" cy="923.7" r="0.7" fill="#3b3b3b"/><path d="M17 1043.5l-3.8 4.2 3.8 4.2M21.6 1043.5l-3.8 4.2 3.8 4.2" fill="none" stroke="#3b3b3b" stroke-width="1.35" stroke-linecap="round" stroke-linejoin="round" stroke-width="1.2"/><path d="M185.2 341.2l4.9 4.6 4.9-4.6" fill="none" stroke="#4a4a4a" stroke-width="1.15" stroke-linecap="round" stroke-linejoin="round"/><path d="M185.2 490.5l4.9 4.6 4.9-4.6" fill="none" stroke="#4a4a4a" stroke-width="1.15" stroke-linecap="round" stroke-linejoin="round"/><path d="M185.2 527.1l4.9 4.6 4.9-4.6" fill="none" stroke="#4a4a4a" stroke-width="1.15" stroke-linecap="round" stroke-linejoin="round"/><path d="M185.2 562.5l4.9 4.6 4.9-4.6" fill="none" stroke="#4a4a4a" stroke-width="1.15" stroke-linecap="round" stroke-linejoin="round"/><path d="M185.2 381.8l4.9-4.6 4.9 4.6" fill="none" stroke="#4a4a4a" stroke-width="1.15" stroke-linecap="round" stroke-linejoin="round"/></svg>
</body></html>
